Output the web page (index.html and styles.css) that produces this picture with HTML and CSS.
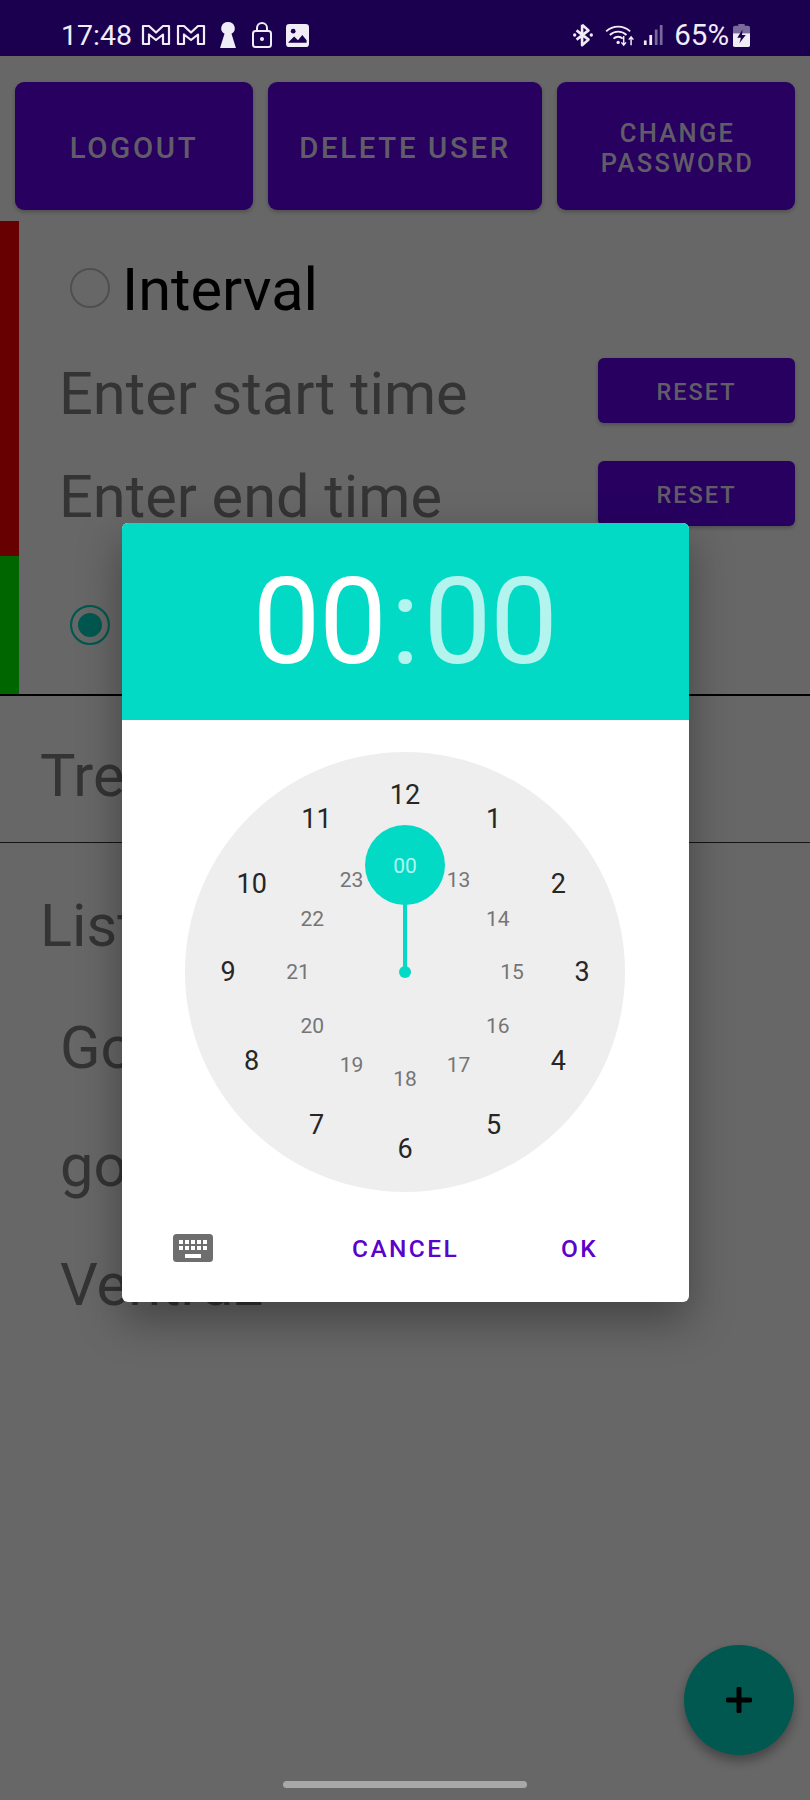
FILE: index.html
```html
<!DOCTYPE html>
<html lang="en">
<head>
    <meta charset="UTF-8">
    <meta name="viewport" content="width=device-width, initial-scale=1.0">
    <title>Time picker</title>
    <link rel="stylesheet" href="styles.css">
</head>
<body>
    <div class="screen">
        <div class="account-bar">
            <button class="btn btn-side btn-big">LOGOUT</button>
            <button class="btn btn-mid btn-big">DELETE USER</button>
            <button class="btn btn-side btn-small">CHANGE<br>PASSWORD</button>
        </div>

        <div class="mode-panel">
            <div class="stripe">
                <div class="stripe-red"></div>
                <div class="stripe-green"></div>
            </div>
            <div class="mode-body">
                <div class="radio-row">
                    <span class="radio"></span>
                    <span class="radio-label">Interval</span>
                </div>
                <div class="time-row time-row-start">
                    <span class="time-hint">Enter start time</span>
                    <button class="btn btn-reset">RESET</button>
                </div>
                <div class="time-row time-row-end">
                    <span class="time-hint">Enter end time</span>
                    <button class="btn btn-reset">RESET</button>
                </div>
                <div class="radio-row radio-row-on">
                    <span class="radio radio-checked"></span>
                    <span class="radio-label">Daily</span>
                </div>
            </div>
        </div>

        <div class="threshold">Treshold of temperature:</div>

        <div class="list">
            <div class="list-title">List of devices</div>
            <div class="list-item item-first">Google</div>
            <div class="list-item item-second">google2</div>
            <div class="list-item">Ventrdz</div>
        </div>

        <button class="fab">
            <svg width="26" height="26" viewBox="0 0 26 26"><path d="M13 2v22M2 13h22" stroke="#000" stroke-width="5" stroke-linecap="round"/></svg>
        </button>
    </div>

    <div class="scrim"></div>

    <div class="status-bar">
        <div class="status-left">
            <span class="status-time">17:48</span>
            <svg class="ic ic-m" width="30" height="22" viewBox="0 0 30 22"><path d="M2 2h6l7 6.500L22 2h6v18h-6V10.500L15 16 8 10.500V20H2z" fill="none" stroke="#f1edf7" stroke-width="2.200" stroke-linejoin="round"/></svg>
            <svg class="ic ic-m" width="30" height="22" viewBox="0 0 30 22"><path d="M2 2h6l7 6.500L22 2h6v18h-6V10.500L15 16 8 10.500V20H2z" fill="none" stroke="#f1edf7" stroke-width="2.200" stroke-linejoin="round"/></svg>
            <svg class="ic ic-key" width="18" height="26" viewBox="0 0 17 26" preserveAspectRatio="none"><path d="M8.500 0a6.300 6.300 0 0 1 3.300 11.700L16 26H1l4.200-14.300A6.300 6.300 0 0 1 8.500 0z" fill="#f1edf7"/></svg>
            <svg class="ic ic-lock" width="20" height="26" viewBox="0 0 20 26"><rect x="1" y="9" width="18" height="16" rx="2.500" fill="none" stroke="#f1edf7" stroke-width="2"/><path d="M5 9V6a5 5 0 0 1 10 0v3" fill="none" stroke="#f1edf7" stroke-width="2"/><circle cx="10" cy="17" r="2" fill="#f1edf7"/></svg>
            <svg class="ic" width="23" height="23" viewBox="0 0 24 24"><rect width="24" height="24" rx="3.500" fill="#f1edf7"/><circle cx="7.500" cy="7.500" r="2.500" fill="#1c0050"/><path d="M2.500 19l6-6 4 4 4.500-5.500 4.500 5.500v2.500h-19z" fill="#1c0050"/></svg>
        </div>
        <div class="status-right">
            <svg class="ic" width="22" height="24" viewBox="0 0 22 26"><path d="M10 2v22l7-6-13-10M10 2l7 6-13 10" fill="none" stroke="#f1edf7" stroke-width="2.800" stroke-linejoin="round"/><circle cx="2" cy="13" r="1.800" fill="#f1edf7"/><circle cx="20" cy="13" r="1.800" fill="#f1edf7"/></svg>
            <svg class="ic ic-wifi" width="32" height="24" viewBox="0 0 32 26"><path d="M1 9a19 19 0 0 1 26 0M5 13a13 13 0 0 1 18 0M9 17a7 7 0 0 1 10 0" fill="none" stroke="#f1edf7" stroke-width="2"/><circle cx="14" cy="21" r="1.800" fill="#f1edf7"/><path d="M20 14v10M17.500 21l2.500 3 2.500-3M28 24V15M25.500 18l2.500-3 2.500 3" fill="none" stroke="#f1edf7" stroke-width="1.600"/></svg>
            <svg class="ic ic-signal" width="20" height="22" viewBox="0 0 22 24"><rect x="1" y="18" width="3" height="5" fill="#f1edf7"/><rect x="7" y="12" width="3" height="11" fill="#f1edf7"/><rect x="13" y="6" width="3" height="17" fill="#7a6a9c"/><rect x="18.500" y="1" width="3" height="22" fill="#7a6a9c"/></svg>
            <span class="status-batt">65%</span>
            <svg class="ic" width="17" height="24" viewBox="0 0 16 26" preserveAspectRatio="none"><path d="M5 1h6v2h3a2 2 0 0 1 2 2v6H0V5a2 2 0 0 1 2-2h3z" fill="#7a6a9c"/><path d="M0 11h16v13a2 2 0 0 1-2 2H2a2 2 0 0 1-2-2z" fill="#f1edf7"/><path d="M9 7l-5 9h3.500L6 22l6-9H8.500z" fill="#1c0050"/></svg>
        </div>
    </div>

    <div class="dialog">
        <div class="dialog-head">
            <span class="head-hour">00</span><span class="head-colon">:</span><span class="head-min">00</span>
        </div>
        <div class="dialog-clock">
            <svg class="clock" width="440" height="440" viewBox="0 0 440 440">
                <circle cx="220" cy="220" r="220" fill="#eeeeee"/>
                <line x1="220" y1="220" x2="220" y2="113" stroke="#03dac5" stroke-width="4"/>
                <circle cx="220" cy="220" r="6" fill="#03dac5"/>
                <circle cx="220" cy="113" r="40" fill="#03dac5"/>
                <g class="num-outer">
                    <text x="220" y="43">12</text>
                    <text x="308.500" y="67">1</text>
                    <text x="373.300" y="131.500">2</text>
                    <text x="397" y="220">3</text>
                    <text x="373.300" y="308.500">4</text>
                    <text x="308.500" y="373.300">5</text>
                    <text x="220" y="397">6</text>
                    <text x="131.500" y="373.300">7</text>
                    <text x="66.700" y="308.500">8</text>
                    <text x="43" y="220">9</text>
                    <text x="66.700" y="131.500">10</text>
                    <text x="131.500" y="67">11</text>
                </g>
                <g class="num-inner">
                    <text class="num-sel" x="220" y="114">00</text>
                    <text x="273.500" y="128.300">13</text>
                    <text x="312.700" y="166.500">14</text>
                    <text x="327" y="220">15</text>
                    <text x="312.700" y="273.500">16</text>
                    <text x="273.500" y="312.700">17</text>
                    <text x="220" y="327">18</text>
                    <text x="166.500" y="312.700">19</text>
                    <text x="127.300" y="273.500">20</text>
                    <text x="113" y="220">21</text>
                    <text x="127.300" y="166.500">22</text>
                    <text x="166.500" y="128.300">23</text>
                </g>
            </svg>
        </div>
        <div class="dialog-foot">
            <svg class="kbd" width="40" height="28" viewBox="0 0 40 28">
                <rect width="40" height="28" rx="3.500" fill="#6e6e6e"/>
                <path fill="#fff" d="M6 6h4v4H6zM12 6h4v4h-4zM18 6h4v4h-4zM24 6h4v4h-4zM30 6h4v4h-4zM6 12h4v4H6zM12 12h4v4h-4zM18 12h4v4h-4zM24 12h4v4h-4zM30 12h4v4h-4zM12 20h16v4H12z"/>
            </svg>
            <span class="foot-btn foot-cancel">CANCEL</span>
            <span class="foot-btn foot-ok">OK</span>
        </div>
    </div>

    <div class="nav-pill"></div>
</body>
</html>
```

FILE: styles.css
```css
* {
    box-sizing: border-box;
}
html, body {
    margin: 0;
    height: 1800px;
    overflow: hidden;
}
body {
    position: relative;
    width: 810px;
    background: #fff;
    font-family: Roboto, "Liberation Sans", sans-serif;
}
.screen {
    padding-top: 56px;
    height: 1800px;
    position: relative;
}
.btn {
    border: none;
    border-radius: 9px;
    background: #6200ee;
    color: rgba(255, 255, 255, .92);
    font-family: inherit;
    font-weight: 500;
    padding: 0;
    box-shadow: 0 2px 4px rgba(0, 0, 0, .25);
}
.account-bar {
    display: flex;
    gap: 15px;
    padding: 26px 15px 0;
}
.account-bar .btn {
    height: 128px;
    padding-top: 4px;
}
.btn-big {
    font-size: 29.300px;
    letter-spacing: 2.700px;
}
.account-bar .btn-small {
    padding-left: 3px;
    font-size: 25.500px;
    line-height: 30px;
    letter-spacing: 2.300px;
}
.btn-side {
    width: 238px;
}
.btn-mid {
    width: 274px;
}

.mode-panel {
    display: flex;
    height: 475px;
    margin-top: 11px;
    border-bottom: 2px solid #000;
}
.stripe {
    width: 19px;
    display: flex;
    flex-direction: column;
}
.stripe-red {
    height: 335px;
    background: #f00;
}
.stripe-green {
    flex: 1;
    background: #0f0;
}
.mode-body {
    flex: 1;
    padding: 0 15px 0 40px;
}
.radio-row {
    display: flex;
    align-items: center;
    gap: 12px;
    padding-left: 11px;
    height: 66px;
    margin-top: 34px;
}
.radio {
    width: 40px;
    height: 40px;
    border-radius: 50%;
    border: 2px solid #c4c4c4;
}
.radio-checked {
    border-color: #03dac5;
    background: #03dac5;
    box-shadow: inset 0 0 0 6px #fff;
}
.radio-label {
    font-size: 59.500px;
    line-height: 68px;
    padding-top: 4px;
    color: #000;
}
.time-row {
    display: flex;
    justify-content: space-between;
    align-items: center;
}
.time-row-start {
    margin-top: 37px;
}
.time-row-end {
    margin-top: 38px;
}
.time-hint {
    font-size: 59.500px;
    height: 65px;
    line-height: 72px;
    color: #808080;
}
.btn-reset {
    width: 197px;
    height: 65px;
    padding-top: 3px;
    font-size: 23.500px;
    letter-spacing: 2px;
    border-radius: 6px;
}
.radio-row-on {
    margin-top: 66px;
}

.threshold {
    height: 147px;
    padding: 47px 0 0 40px;
    font-size: 59.500px;
    line-height: 66px;
    color: #808080;
    white-space: nowrap;
    border-bottom: 1px solid #333;
}
.list {
    padding: 50px 0 0 40px;
    font-size: 59.500px;
    color: #808080;
}
.list-title {
    line-height: 66px;
}
.list-item {
    line-height: 66px;
    padding-left: 20px;
    margin-top: 53px;
}
.item-first {
    margin-top: 56px;
}
.item-second {
    margin-top: 52px;
}
.fab {
    position: absolute;
    left: 684px;
    top: 1645px;
    width: 110px;
    height: 110px;
    border: none;
    border-radius: 50%;
    background: #03dac5;
    box-shadow: 0 6px 12px rgba(0, 0, 0, .35);
    display: flex;
    align-items: center;
    justify-content: center;
}

.scrim {
    position: absolute;
    inset: 0;
    background: rgba(0, 0, 0, .595);
}

.status-bar {
    position: absolute;
    left: 0;
    top: 0;
    width: 810px;
    height: 56px;
    background: #1c0050;
    color: #f1edf7;
    display: flex;
    justify-content: space-between;
    align-items: center;
    padding: 14px 60px 0 61px;
}
.status-left, .status-right {
    display: flex;
    align-items: center;
}
.status-time {
    font-size: 28.500px;
    margin-right: 9px;
}
.ic-m {
    margin-right: 5px;
}
.status-left .ic-key {
    margin: 0 15px 0 8px;
}
.status-left .ic-lock {
    margin-right: 14px;
}
.status-batt {
    font-size: 29.500px;
    margin: 0 4px 0 11px;
}
.status-right .ic-wifi {
    margin: 0 7px 0 10px;
}

.dialog {
    position: absolute;
    left: 122px;
    top: 523px;
    width: 567px;
    height: 779px;
    background: #fff;
    border-radius: 6px;
    overflow: hidden;
    box-shadow: 0 18px 44px rgba(0, 0, 0, .35);
}
.dialog-head {
    height: 197px;
    padding: 2px 2px 0 0;
    background: #03dac5;
    display: flex;
    justify-content: center;
    align-items: center;
    font-size: 121px;
    letter-spacing: -1.500px;
    line-height: 1;
    color: #b3f4ee;
}
.head-hour {
    color: #fff;
}
.head-colon {
    margin: 0 5px;
}
.dialog-clock {
    padding: 32px 0 0 63px;
}
.clock {
    display: block;
}
.clock text {
    text-anchor: middle;
    dominant-baseline: central;
}
.num-outer {
    font-size: 27px;
    fill: #262626;
}
.num-inner {
    font-size: 21px;
    fill: #757575;
}
.clock .num-sel {
    fill: #b3f4ee;
}
.dialog-foot {
    position: relative;
    height: 110px;
}
.kbd {
    position: absolute;
    left: 51px;
    top: 42px;
}
.foot-btn {
    position: absolute;
    top: 43px;
    font-size: 24.500px;
    font-weight: 500;
    letter-spacing: 2.400px;
    color: #5b02cc;
    line-height: 28px;
}
.foot-cancel {
    left: 230px;
}
.foot-ok {
    left: 439px;
}

.nav-pill {
    position: absolute;
    left: 283px;
    top: 1781px;
    width: 244px;
    height: 7px;
    border-radius: 4px;
    background: #a8a8a8;
}
```
